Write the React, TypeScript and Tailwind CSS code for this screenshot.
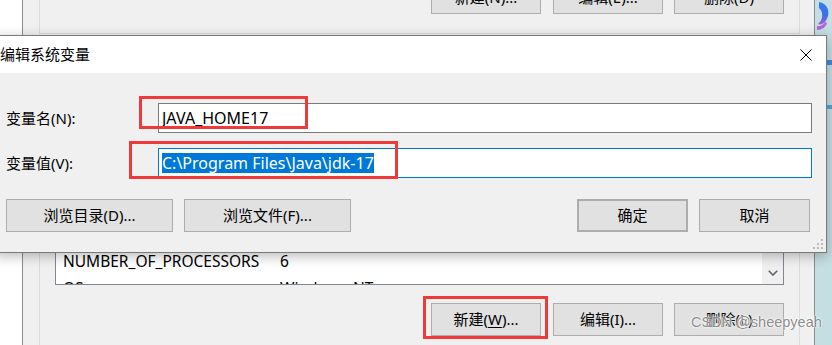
import React from 'react';

// Windows-style push button
function WinButton({
  children,
  className = '',
}: {
  children: React.ReactNode;
  className?: string;
}) {
  return (
    <div
      className={`h-[33px] shrink-0 bg-[#e1e1e1] border border-[#adadad] flex items-center justify-center ${className}`}
    >
      {children}
    </div>
  );
}

function CloseIcon() {
  return (
    <svg width="12" height="12" viewBox="0 0 12 12" className="shrink-0">
      <path d="M0.5 0.5 L11.5 11.5 M11.5 0.5 L0.5 11.5" stroke="#000" strokeWidth="1" fill="none" />
    </svg>
  );
}

function ChevronDown() {
  return (
    <svg width="10" height="6" viewBox="0 0 10 6">
      <path d="M0.8 0.8 L5 5 L9.2 0.8" stroke="#606060" strokeWidth="1.6" fill="none" />
    </svg>
  );
}

export default function App() {
  return (
    <div className="relative w-[832px] h-[345px] overflow-hidden flex bg-white text-[15px] text-black font-['Noto_Sans','Noto_Sans_CJK_SC',sans-serif]">
      {/* window behind, on the left */}
      <div className="w-[22px] shrink-0 bg-white" />

      {/* 环境变量 window */}
      <div className="w-[793px] shrink-0 h-full bg-[#f0f0f0] border-x border-[#8c8c8c] flex flex-col">
        {/* user variables group (bottom part) */}
        <div className="ml-[16px] mr-[14px] h-[34px] shrink-0 border-x border-b border-[#dcdcdc] flex justify-end pr-[15px]">
          <div className="flex mt-[-19px]">
            <WinButton className="w-[110px]">新建(N)...</WinButton>
            <WinButton className="w-[110px] ml-[12px]">编辑(E)...</WinButton>
            <WinButton className="w-[110px] ml-[11px]">删除(D)</WinButton>
          </div>
        </div>

        {/* system variables group */}
        <div className="ml-[16px] mr-[14px] mt-[11px] flex-1 border-x border-t border-[#dcdcdc] flex flex-col">
          <div className="mt-[14px] mx-[15px] h-[225px] shrink-0 border border-[#828790] bg-white flex overflow-hidden">
            <div className="flex-1 flex flex-col pt-[189px] text-[15.5px]">
              <div className="h-[24px] shrink-0 flex items-center">
                <span className="w-[224px] pl-[7px]">NUMBER_OF_PROCESSORS</span>
                <span>6</span>
              </div>
              <div className="h-[24px] mt-[3px] shrink-0 flex items-center">
                <span className="w-[224px] pl-[7px]">OS</span>
                <span>Windows_NT</span>
              </div>
            </div>
            <div className="w-[21px] shrink-0 bg-[#f0f0f0] flex flex-col justify-end">
              <div className="h-[22px] flex items-center justify-center">
                <ChevronDown />
              </div>
            </div>
          </div>

          <div className="mt-[18px] flex justify-end pr-[15px]">
            <WinButton className="w-[110px]">
              新建(<span className="underline underline-offset-2">W</span>)...
            </WinButton>
            <WinButton className="w-[110px] ml-[12px]">编辑(I)...</WinButton>
            <WinButton className="w-[110px] ml-[11px]">删除(L)</WinButton>
          </div>
        </div>
      </div>

      {/* desktop */}
      <div className="flex-1 bg-[#c4dee2] flex flex-col">
        <svg width="17" height="34" viewBox="0 0 17 34">
          <defs>
            <linearGradient id="ic" x1="0" y1="0" x2="0" y2="1">
              <stop offset="0" stopColor="#2f7ff0" />
              <stop offset="0.6" stopColor="#3b6fe6" />
              <stop offset="1" stopColor="#a35fd8" />
            </linearGradient>
          </defs>
          <path d="M4 2 C14 4 16 14 10 22 C8 24 5 25 3 24 C8 20 9 12 4 8 Z" fill="url(#ic)" />
          <path d="M10 22 C7 26 4 27 2 26 L2 30 C7 30 11 27 12 23 Z" fill="#b067d9" />
        </svg>
        <div className="ml-[11px] mt-[26px] w-[6px] h-[5px] bg-[#3d8ad8]" />
        <div className="ml-[11px] mt-[40px] w-[6px] h-[4px] bg-[#5aa0dc]" />
      </div>

      {/* 编辑系统变量 dialog */}
      <div className="absolute left-[-6px] top-[35px] w-[833px] h-[218px] border border-[#7a7a7a] bg-[#f0f0f0] flex flex-col shadow-[0_3px_12px_rgba(0,0,0,0.28)]">
        <div className="h-[37px] shrink-0 bg-white flex items-center justify-between pl-[5px] pr-[14px]">
          <span>编辑系统变量</span>
          <CloseIcon />
        </div>

        <div className="flex-1 flex flex-col pt-[30px] pl-[11px] pr-[14px]">
          <div className="h-[30px] flex items-center">
            <span className="w-[152px] shrink-0">变量名(N):</span>
            <div className="flex-1 h-full bg-white border border-[#7a7a7a] flex items-center pl-[3px] text-[16px]">
              JAVA_HOME17
            </div>
          </div>
          <div className="h-[30px] mt-[15px] flex items-center">
            <span className="w-[152px] shrink-0">变量值(V):</span>
            <div className="flex-1 h-full bg-white border border-[#0078d7] flex items-center pl-[3px] text-[16px]">
              <span className="bg-[#0078d7] text-white leading-[20px]">C:\Program Files\Java\jdk-17</span>
            </div>
          </div>
          <div className="mt-[21px] mr-[2px] flex">
            <WinButton className="w-[167px]">浏览目录(D)...</WinButton>
            <WinButton className="w-[167px] ml-[11px]">浏览文件(F)...</WinButton>
            <WinButton className="w-[111px] ml-auto border-2 border-[#0078d7]">确定</WinButton>
            <WinButton className="w-[111px] ml-[11px]">取消</WinButton>
          </div>
        </div>

        {/* size grip */}
        <div className="absolute right-[3px] bottom-[3px] flex flex-col items-end gap-[2px]">
          <div className="flex gap-[2px]">
            <div className="w-[2px] h-[2px] bg-[#bcbcbc]" />
          </div>
          <div className="flex gap-[2px]">
            <div className="w-[2px] h-[2px] bg-[#bcbcbc]" />
            <div className="w-[2px] h-[2px] bg-[#bcbcbc]" />
          </div>
          <div className="flex gap-[2px]">
            <div className="w-[2px] h-[2px] bg-[#bcbcbc]" />
            <div className="w-[2px] h-[2px] bg-[#bcbcbc]" />
            <div className="w-[2px] h-[2px] bg-[#bcbcbc]" />
          </div>
        </div>
      </div>

      {/* red annotation boxes */}
      <div className="absolute left-[139px] top-[96px] w-[169px] h-[33px] border-[3px] border-[#f03a3a]" />
      <div className="absolute left-[129px] top-[141px] w-[269px] h-[38px] border-[3px] border-[#f03a3a]" />
      <div className="absolute left-[423px] top-[296px] w-[125px] h-[43px] border-[3px] border-[#f03a3a]" />

      {/* watermark */}
      <div className="absolute left-[691px] top-[312px] text-[14.5px] leading-[20px] text-[rgba(125,125,125,0.9)] font-['Liberation_Sans',sans-serif] [text-shadow:0_0_1px_#fff,0_0_2px_#fff,0_0_3px_rgba(255,255,255,0.8)]">
        CSDN @sheepyeah
      </div>
    </div>
  );
}
